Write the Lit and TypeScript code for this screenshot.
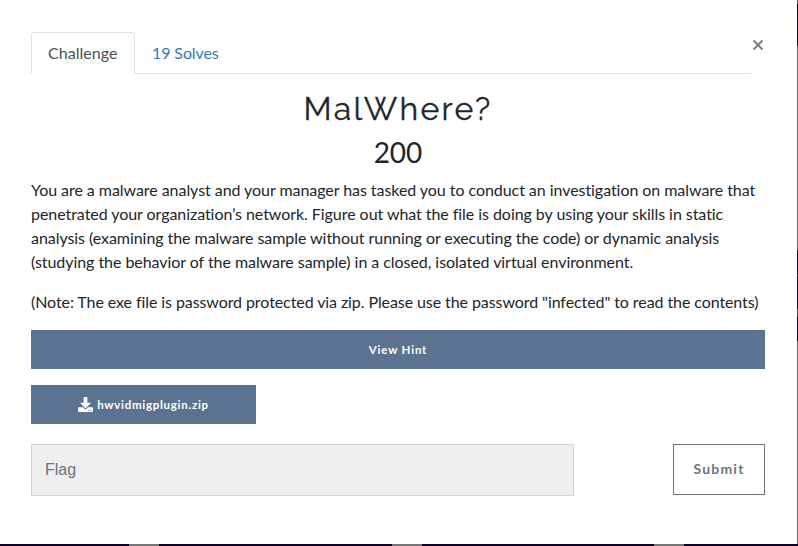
import { LitElement, html, css } from "lit";
import { customElement } from "lit/decorators.js";

@customElement("app-root")
export class AppRoot extends LitElement {
  static styles = css`
    :host { display: block; height: 546px; overflow: hidden; background: #0d0221; font: 16px/24px Lato, sans-serif; color: #212529; }
    * { box-sizing: border-box; }
    .page { display: grid; grid-template: 544px 2px / 797px 1px; height: 546px; }
    .modal { background: #fff; padding: 32px 32px 0 31px; }
    .side { background: linear-gradient(#6b6b6b 0 4px, #080818 4px 46px, #6b6b6b 46px 250px, #0b0920 250px 275px, #555 275px 276px, #0b0920 276px 309px, #4a5550 309px 317px, #0b0920 317px 341px, #6b6b6b 341px); }
    .floor { grid-column: 1 / 3; background: linear-gradient(90deg, transparent 129px, #767676 129px 159px, transparent 159px 392px, #767676 392px 422px, transparent 422px 654px, #767676 654px 684px, transparent 684px); }
    .top { display: flex; height: 42px; }
    .tabs { display: flex; width: 720px; border-bottom: 1px solid #dee2e6; }
    .tab { height: 42px; padding: 8px 16px; color: #337ab7; border: 1px solid transparent; white-space: nowrap; letter-spacing: -0.1px; }
    .tab.active { width: 104px; color: #495057; background: #fff; border-color: #dee2e6 #dee2e6 #fff; border-radius: 4px 4px 0 0; letter-spacing: 0.05px; }
    .close { width: 12px; height: 12px; margin: 7px 0 0 1px; display: block; }
    h3, h4 { margin: 0; text-align: center; font-weight: 400; width: 734px; }
    h3 { font: 400 32px/38px Raleway, Lato, sans-serif; letter-spacing: 2.25px; margin-top: 16px; -webkit-text-stroke: 0.3px #212529; }
    h4 { font-size: 28px; line-height: 34px; margin-top: 7px; }
    p { margin: 0 0 16px; white-space: nowrap; letter-spacing: -0.085px; }
    .desc { margin-top: 9px; letter-spacing: -0.055px; }
    .bar { display: flex; align-items: center; justify-content: center; gap: 4px; height: 39px; width: 734px; background: #5b7290; color: #fff; font-size: 11.5px; font-weight: 700; letter-spacing: 0.8px; }
    .file { width: 225px; margin: 16px 0 20px; letter-spacing: 0.72px; }
    .row { display: flex; justify-content: space-between; width: 734px; }
    .flag { width: 543px; height: 52px; background: #efefef; border: 1px solid #ced4da; padding: 13px; color: #6c757d; font-family: "Liberation Sans", sans-serif; }
    .submit { width: 92px; height: 51px; border: 1px solid #6c757d; display: grid; place-items: center; color: #6c757d; font-size: 14px; font-weight: 700; letter-spacing: 1.2px; padding-bottom: 2px; }
  `;

  render() {
    return html`<div class="page">
      <div class="modal">
        <div class="top">
          <div class="tabs"><span class="tab active">Challenge</span><span class="tab">19 Solves</span></div>
          <svg class="close" viewBox="0 0 12 12"><path d="M1.500 1.500 10.500 10.500M10.500 1.500 1.500 10.500" stroke="#7f7f7f" stroke-width="2.1" /></svg>
        </div>
        <h3>MalWhere?</h3>
        <h4>200</h4>
        <p class="desc">You are a malware analyst and your manager has tasked you to conduct an investigation on malware that<br />penetrated your organization’s network. Figure out what the file is doing by using your skills in static<br />analysis (examining the malware sample without running or executing the code) or dynamic analysis<br />(studying the behavior of the malware sample) in a closed, isolated virtual environment.</p>
        <p>(Note: The exe file is password protected via zip. Please use the password "infected" to read the contents)</p>
        <div class="bar">View Hint</div>
        <div class="bar file">
          <svg width="15" height="15" viewBox="0 0 512 512" fill="#fff"><path d="M216 0h80c13.300 0 24 10.700 24 24v168h87.700c17.800 0 26.700 21.500 14.100 34.100L269.700 378.300c-7.500 7.500-19.800 7.500-27.300 0L90.100 226.100c-12.600-12.600-3.700-34.100 14.100-34.100H192V24c0-13.300 10.700-24 24-24zm296 376v112c0 13.300-10.700 24-24 24H24c-13.300 0-24-10.700-24-24V376c0-13.300 10.700-24 24-24h146.700l49 49c20.100 20.100 52.500 20.100 72.600 0l49-49H488c13.300 0 24 10.700 24 24zm-124 88c0-11-9-20-20-20s-20 9-20 20 9 20 20 20 20-9 20-20zm64 0c0-11-9-20-20-20s-20 9-20 20 9 20 20 20 20-9 20-20z" /></svg>
          <span>hwvidmigplugin.zip</span>
        </div>
        <div class="row"><div class="flag">Flag</div><div class="submit">Submit</div></div>
      </div>
      <div class="side"></div>
      <div class="floor"></div>
    </div>`;
  }
}
